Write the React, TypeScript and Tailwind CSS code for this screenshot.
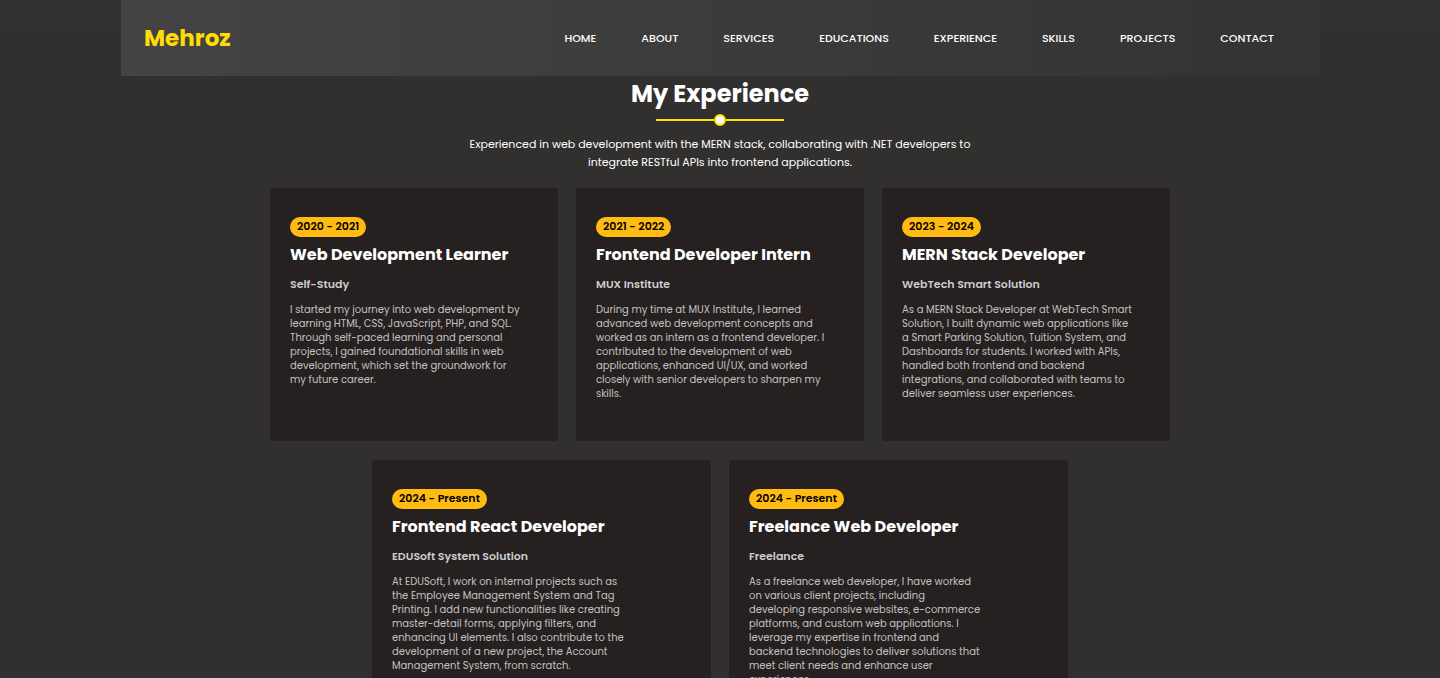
const links = ['Home', 'About', 'Services', 'Educations', 'Experience', 'Skills', 'Projects', 'Contact'];

type Job = { period: string; title: string; company: string; text: string };

const earlier: Job[] = [
  {
    period: '2020 - 2021',
    title: 'Web Development Learner',
    company: 'Self-Study',
    text: 'I started my journey into web development by\nlearning HTML, CSS, JavaScript, PHP, and SQL.\nThrough self-paced learning and personal\nprojects, I gained foundational skills in web\ndevelopment, which set the groundwork for\nmy future career.',
  },
  {
    period: '2021 - 2022',
    title: 'Frontend Developer Intern',
    company: 'MUX Institute',
    text: 'During my time at MUX Institute, I learned\nadvanced web development concepts and\nworked as an intern as a frontend developer. I\ncontributed to the development of web\napplications, enhanced UI/UX, and worked\nclosely with senior developers to sharpen my\nskills.',
  },
  {
    period: '2023 - 2024',
    title: 'MERN Stack Developer',
    company: 'WebTech Smart Solution',
    text: 'As a MERN Stack Developer at WebTech Smart\nSolution, I built dynamic web applications like\na Smart Parking Solution, Tuition System, and\nDashboards for students. I worked with APIs,\nhandled both frontend and backend\nintegrations, and collaborated with teams to\ndeliver seamless user experiences.',
  },
];

const current: Job[] = [
  {
    period: '2024 - Present',
    title: 'Frontend React Developer',
    company: 'EDUSoft System Solution',
    text: 'At EDUSoft, I work on internal projects such as\nthe Employee Management System and Tag\nPrinting. I add new functionalities like creating\nmaster-detail forms, applying filters, and\nenhancing UI elements. I also contribute to the\ndevelopment of a new project, the Account\nManagement System, from scratch.',
  },
  {
    period: '2024 - Present',
    title: 'Freelance Web Developer',
    company: 'Freelance',
    text: 'As a freelance web developer, I have worked\non various client projects, including\ndeveloping responsive websites, e-commerce\nplatforms, and custom web applications. I\nleverage my expertise in frontend and\nbackend technologies to deliver solutions that\nmeet client needs and enhance user\nexperiences.',
  },
];

function JobCard({ job }: { job: Job }) {
  return (
    <article className="flex flex-col items-start rounded-[3px] bg-[#262020] px-5 pt-[29px] pb-10">
      <p className="rounded-full bg-[#ffbb11] px-[7px] pb-0.5 text-[11px] leading-[18px] font-semibold text-black">{job.period}</p>
      <h2 className="mt-1.5 text-base leading-6 font-bold text-white">{job.title}</h2>
      <h3 className="mt-[9px] text-[11px] leading-4 font-semibold text-[#cccccc]">{job.company}</h3>
      <p className="mt-[11px] text-[10px] leading-[14px] whitespace-pre-line text-[#c3c1c1]">{job.text}</p>
    </article>
  );
}

export default function App() {
  return (
    <div className="min-h-screen bg-[#31302e] font-['Poppins','Inter',sans-serif] text-white">
      <header className="bg-[linear-gradient(#323232_26px,transparent_26px)] px-[121px]">
        <nav className="flex h-[76px] items-center justify-between bg-linear-to-r from-[#444444] to-[#333333] px-[23px]">
          <a href="#home" className="text-[23px] leading-8 font-bold text-[#ffdd00]">Mehroz</a>
          <ul className="flex gap-px text-[11px] leading-4">
            {links.map((link) => (
              <li key={link}>
                <a href={'#' + link.toLowerCase()} className="block px-[22px] font-medium uppercase">{link}</a>
              </li>
            ))}
          </ul>
        </nav>
      </header>
      <main className="flex flex-col items-center">
        <h1 className="text-2xl leading-9 font-bold">My Experience</h1>
        <div className="mt-0.5 flex w-32 items-center">
          <span className="h-0.5 flex-1 bg-[#ffdd00]" />
          <span className="size-3 rounded-full border-2 border-[#ffdd00] bg-white" />
          <span className="h-0.5 flex-1 bg-[#ffdd00]" />
        </div>
        <p className="mt-[9px] text-center text-[11px] leading-[18px] whitespace-pre-line">
          {'Experienced in web development with the MERN stack, collaborating with .NET developers to\nintegrate RESTful APIs into frontend applications.'}
        </p>
        <div className="mt-[17px] grid min-h-[253px] w-full max-w-[900px] grid-cols-3 gap-[18px]">
          {earlier.map((job) => <JobCard key={job.title} job={job} />)}
        </div>
        <div className="mt-[19px] grid min-h-[253px] w-full max-w-[696px] grid-cols-2 gap-[18px]">
          {current.map((job) => <JobCard key={job.title} job={job} />)}
        </div>
      </main>
    </div>
  );
}
